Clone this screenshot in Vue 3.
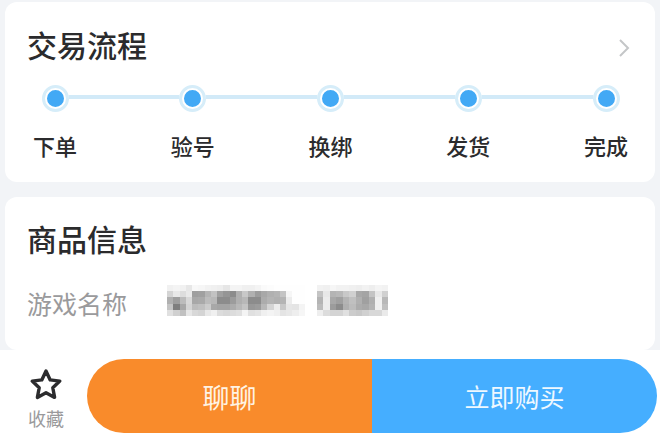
<script setup>
const steps = ['下单', '验号', '换绑', '发货', '完成']
const first = [
  'f1f4f1e7f8f6f2f0eee6f4f4f0f0f4fafcfefefefefe',
  'd4e8dde99ea0b4c2a0958cb0c8b09ca8b0b4c4f6fefe',
  'b09ebcd8a8aabcb88c8c9cb0b88c8cacb4b0b4ecfefe',
  'c47ea8d4bcc0cca8a4a4acb8c4989cb8d4ecc8e6e4f4',
  'e0d0c0e6d8d4e8f0dcd8dce0f4e0e4f0f4f0e4e8eef6'
]
const second = [
  'f2f0f6f2f2f0eef2eef4f2',
  'c4e8b4b8c8d0a8a4c4e8d0',
  'b4eca8a0b4c0b0a0b0f0b8',
  'bcec9c8cb0bcaca8b4f0c0',
  'eedcd4d4e0ccc8d0d8d8ea'
]
const toCells = rows => rows.flatMap(r => r.match(/../g).map(h => `#${h}${h}${h}`))
const firstCells = toCells(first)
const secondCells = toCells(second)
</script>

<template>
  <div class="page">
    <section class="card flow">
      <div class="head">
        <h2>交易流程</h2>
        <svg class="chevron" width="14" height="22" viewBox="0 0 14 22">
          <path d="M3 3l8 8-8 8" fill="none" stroke="#c4c6c8" stroke-width="2" />
        </svg>
      </div>
      <div class="steps">
        <div v-for="(s, i) in steps" :key="s" class="step">
          <i v-if="i < steps.length - 1" class="line"></i>
          <span class="dot"></span>
          <span class="label">{{ s }}</span>
        </div>
      </div>
    </section>

    <section class="card info">
      <h2>商品信息</h2>
      <div class="row">
        <span class="key">游戏名称</span>
        <div class="mosaic">
          <div class="cells wide">
            <i v-for="(c, i) in firstCells" :key="i" :style="{ background: c }"></i>
          </div>
          <div class="cells narrow">
            <i v-for="(c, i) in secondCells" :key="i" :style="{ background: c }"></i>
          </div>
        </div>
      </div>
    </section>

    <footer class="bar">
      <div class="fav">
        <svg width="34" height="32" viewBox="0 0 34 32">
          <path d="M17 3l4.2 8.9 9.6 1.2-7 6.7 1.8 9.6L17 24.7l-8.6 4.7 1.8-9.6-7-6.7 9.6-1.2z" fill="none" stroke="#2c2c2e" stroke-width="3.4" stroke-linejoin="round" />
        </svg>
        <span>收藏</span>
      </div>
      <div class="actions">
        <button class="chat">聊聊</button>
        <button class="buy">立即购买</button>
      </div>
    </footer>
  </div>
</template>

<style>
html, body { margin: 0; background: #f2f4f7; }
</style>

<style scoped>
.page {
  width: 660px;
  height: 440px;
  overflow: hidden;
  background: #f2f4f7;
  display: flex;
  flex-direction: column;
  font-family: "Noto Sans CJK SC", "Noto Sans", sans-serif;
  color: #2b2b2d;
}
.card {
  background: #fff;
  margin: 0 5px;
  border-radius: 12px;
}
.flow {
  margin-top: 2px;
  height: 180px;
  flex: none;
  box-sizing: border-box;
  padding: 20px 0 0;
}
h2 {
  margin: 0;
  font-size: 30px;
  line-height: 44px;
  font-weight: 500;
}
.head {
  display: flex;
  justify-content: space-between;
  align-items: center;
  padding: 0 24px 0 22px;
}
.chevron { margin-top: 8px; }
.steps {
  display: flex;
  justify-content: space-between;
  padding: 0 0 0 10px;
  width: 631px;
  margin-top: 19px;
}
.step {
  position: relative;
  width: 80px;
  display: flex;
  flex-direction: column;
  align-items: center;
}
.line {
  position: absolute;
  left: 40px;
  top: 10px;
  width: 138px;
  height: 4px;
  background: #d2eaf8;
}
.dot {
  position: relative;
  box-sizing: border-box;
  width: 27px;
  height: 27px;
  border-radius: 50%;
  background: #42a9f5;
  border: 5px solid #fff;
  outline: 3px solid #d6edf9;
  outline-offset: -3px;
}
.label {
  margin-top: 17px;
  font-size: 22px;
  line-height: 32px;
  font-weight: 500;
}
.info {
  margin-top: 15px;
  flex: 1;
  padding: 19px 22px 0;
}
.row {
  display: flex;
  align-items: center;
  margin-top: 25px;
}
.key {
  width: 140px;
  font-size: 25px;
  line-height: 36px;
  color: #9a9a9c;
}
.mosaic {
  display: flex;
  gap: 12px;
  margin-top: -5px;
  filter: blur(0.6px);
}
.cells {
  display: grid;
  grid-auto-rows: 6.2px;
}
.wide { grid-template-columns: repeat(22, 6.27px); }
.narrow { grid-template-columns: repeat(11, 6.5px); }
.bar {
  flex: none;
  height: 90px;
  box-sizing: border-box;
  padding: 9px 3px 7px 0;
  background: #fff;
  display: flex;
}
.fav {
  width: 87px;
  flex: none;
  padding-left: 10px;
  padding-right: 5px;
  box-sizing: border-box;
  display: flex;
  flex-direction: column;
  align-items: center;
  color: #9a9a9c;
  font-size: 18px;
  line-height: 26px;
}
.fav svg { margin-top: 9px; margin-bottom: 5px; }
.actions {
  flex: 1;
  display: flex;
  height: 74px;
  border-radius: 37px;
  overflow: hidden;
}
button {
  flex: 1;
  border: 0;
  padding: 0;
  font: inherit;
  font-weight: 400;
}
.chat { background: #f98b2b; color: #fff3e4; font-size: 27px; }
.buy { background: #45aeff; color: #eef8ff; font-size: 25px; }
</style>
